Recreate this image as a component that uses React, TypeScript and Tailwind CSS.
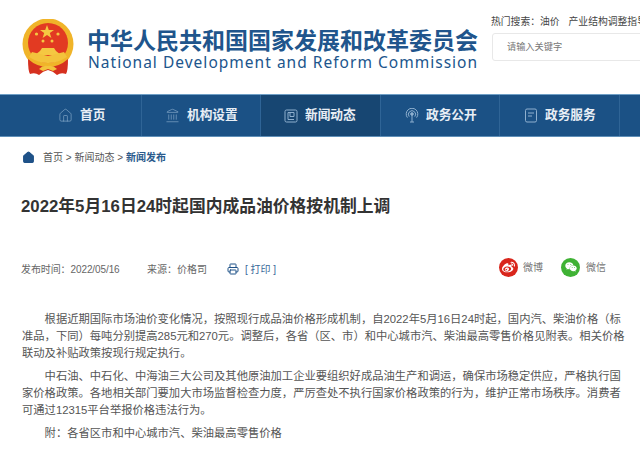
import { Home, Landmark, Printer } from 'lucide-react';
import { FaWeibo, FaWeixin } from 'react-icons/fa';

function NewsIcon() {
  return (
    <svg width="14" height="14" viewBox="0 0 14 14" fill="none" stroke="#8fb0cf" strokeWidth="1">
      <rect x="1" y="1" width="12" height="12" rx="1.5" />
      <path d="M4 3.5H10V7.5H6V3.5M4 3.5V10.5H10" />
    </svg>
  );
}

function SignalIcon() {
  return (
    <svg width="14" height="15" viewBox="0 0 14 15" fill="none" stroke="#8fb0cf" strokeWidth="1">
      <path d="M2.4 9.6A5.8 5.8 0 1 1 11.6 9.6" />
      <path d="M4.2 8.6A3.6 3.6 0 1 1 9.8 8.6" />
      <circle cx="7" cy="6" r="1.3" fill="#8fb0cf" />
      <path d="M7 7V14M5 14H9" />
    </svg>
  );
}

function BookIcon() {
  return (
    <svg width="14" height="15" viewBox="0 0 14 15" fill="none" stroke="#8fb0cf" strokeWidth="1">
      <rect x="1.5" y="1" width="11" height="13" rx="1.5" />
      <path d="M4 5H10M4 8H8" />
    </svg>
  );
}

const navItems = [
  { label: '首页', icon: <Home size={15} strokeWidth={1} className="text-[#8fb0cf]" />, width: 'w-[142px]', pad: 'pl-[58px]', active: false },
  { label: '机构设置', icon: <Landmark size={15} strokeWidth={1} className="text-[#8fb0cf]" />, width: 'w-[119px]', pad: 'pl-[23px]', active: false },
  { label: '新闻动态', icon: <NewsIcon />, width: 'w-[120px]', pad: 'pl-[23px]', active: true },
  { label: '政务公开', icon: <SignalIcon />, width: 'w-[119px]', pad: 'pl-[24px]', active: false },
  { label: '政务服务', icon: <BookIcon />, width: 'w-[120px]', pad: 'pl-[24px]', active: false },
];

function Emblem() {
  return (
    <svg width="54" height="57" viewBox="0 0 54 57" className="shrink-0">
      <circle cx="27" cy="25" r="25.5" fill="#f0b429" />
      <circle cx="27" cy="24" r="20" fill="#e23a22" />
      <polygon points="26,6 27.8,11 33,11 28.8,14 30.4,19 26,16 21.6,19 23.2,14 19,11 24.2,11" fill="#f5c842" />
      <circle cx="15.5" cy="15" r="1.6" fill="#f5c842" />
      <circle cx="37" cy="15" r="1.6" fill="#f5c842" />
      <circle cx="22" cy="22" r="1.5" fill="#f5c842" />
      <circle cx="31" cy="22" r="1.5" fill="#f5c842" />
      <path d="M14 36 L19 32 L21 29 H33 L35 32 L40 36 Z" fill="#f5c842" />
      <path d="M8 38 Q27 50 46 38 L43 33 L27 37 L11 33 Z" fill="#f3c33c" />
      <path d="M7 40 Q7 52 9 55 Q14 53 18 56 Q22 52 27 51 Q32 52 36 56 Q40 53 45 55 Q47 52 47 40 Q38 48 27 48 Q16 48 7 40 Z" fill="#d6301f" />
      <path d="M18 50 Q22 46 27 47 Q32 46 36 50 L32 52 L27 50 L22 52 Z" fill="#f3c33c" />
    </svg>
  );
}

export default function App() {
  return (
    <div className="w-[640px] h-[455px] overflow-hidden bg-white font-['Liberation_Sans','Noto_Sans_CJK_SC',sans-serif] text-[#555]">
      {/* Header */}
      <header className="h-[94px] flex pl-[21px] pt-[19px]">
        <Emblem />
        <div className="ml-[12px] pt-[10px] w-[392px] shrink-0">
          <div className="text-[23px] leading-[25px] font-bold text-[#20558c] whitespace-nowrap">
            中华人民共和国国家发展和改革委员会
          </div>
          <div className="text-[15.5px] leading-[17px] ml-[1px] tracking-[1.02px] text-[#20558c] whitespace-nowrap font-['Noto_Sans',sans-serif]">
            National Development and Reform Commission
          </div>
        </div>
        <div className="ml-[12px] -mt-[4px] min-w-0 flex-1">
          <div className="text-[9.8px] leading-[14px] whitespace-nowrap text-[#444] mb-[4px]">
            热门搜索：油价<span className="ml-[9px]">产业结构调整指导</span>
          </div>
          <div className="h-[28px] ml-[1px] w-[200px] border border-[#e8e8e8] rounded-[3px] pl-[14px] text-[9.2px] leading-[26px] text-[#777]">
            请输入关键字
          </div>
        </div>
      </header>

      {/* Nav */}
      <nav className="h-[43px] flex border-t border-b border-t-[#6f9fc6] border-b-[#5f8fb8] bg-[#1b5185]">
        {navItems.map((item) => (
          <div
            key={item.label}
            className={`${item.width} ${item.pad} shrink-0 flex items-center gap-[7px] border-r border-[#2f6496] ${item.active ? 'bg-[#174672]' : ''}`}
          >
            {item.icon}
            <span className="text-[12.7px] font-bold text-[#e8eef5] whitespace-nowrap">{item.label}</span>
          </div>
        ))}
      </nav>

      {/* Breadcrumb */}
      <div className="mt-[12px] ml-[22px] h-[16px] flex items-center text-[10px] text-[#555]">
        <Home size={13} fill="#1f5288" className="text-[#1f5288] mr-[8px]" />
        <span>首页 &gt; 新闻动态 &gt;</span>
        <span className="ml-[3px] font-bold text-[#2a5a8c]">新闻发布</span>
      </div>

      {/* Title */}
      <h1 className="mt-[30px] ml-[21px] text-[16.8px] leading-[24px] font-bold text-[#333] whitespace-nowrap">
        2022年5月16日24时起国内成品油价格按机制上调
      </h1>

      {/* Meta + share */}
      <div className="mt-[37px] pl-[21px] h-[26px] flex items-center text-[10px] text-[#666]">
        <span className="w-[126px] tracking-[-0.1px]">发布时间：2022/05/16</span>
        <span className="w-[80px]">来源：价格司</span>
        <Printer size={12} className="text-[#1f5288] mr-[6px]" />
        <span className="w-[56px] text-[#3a6a9a] whitespace-nowrap">[ 打印 ]</span>
        <div className="ml-[198px] -mt-[4px] flex items-center">
          <span className="w-[19px] h-[19px] rounded-full bg-[#d9261c] flex items-center justify-center mr-[5px]">
            <FaWeibo size={13} className="text-white" />
          </span>
          <span className="w-[38px] text-[#777]">微博</span>
          <span className="w-[19px] h-[19px] rounded-full bg-[#3fb234] flex items-center justify-center mr-[6px]">
            <FaWeixin size={12} className="text-white" />
          </span>
          <span className="text-[#777]">微信</span>
        </div>
      </div>

      {/* Article */}
      <article className="mt-[29px] pl-[22px] w-[626px] text-[11.3px] leading-[17px] text-[#555]">
        <p className="indent-[22.6px] mb-[6px]">
          根据近期国际市场油价变化情况，按照现行成品油价格形成机制，自2022年5月16日24时起，国内汽、柴油价格（标准品，下同）每吨分别提高285元和270元。调整后，各省（区、市）和中心城市汽、柴油最高零售价格见附表。相关价格联动及补贴政策按现行规定执行。
        </p>
        <p className="indent-[22.6px] mb-[6px]">
          中石油、中石化、中海油三大公司及其他原油加工企业要组织好成品油生产和调运，确保市场稳定供应，严格执行国家价格政策。各地相关部门要加大市场监督检查力度，严厉查处不执行国家价格政策的行为，维护正常市场秩序。消费者可通过12315平台举报价格违法行为。
        </p>
        <p className="indent-[22.6px]">附：各省区市和中心城市汽、柴油最高零售价格</p>
      </article>
    </div>
  );
}
